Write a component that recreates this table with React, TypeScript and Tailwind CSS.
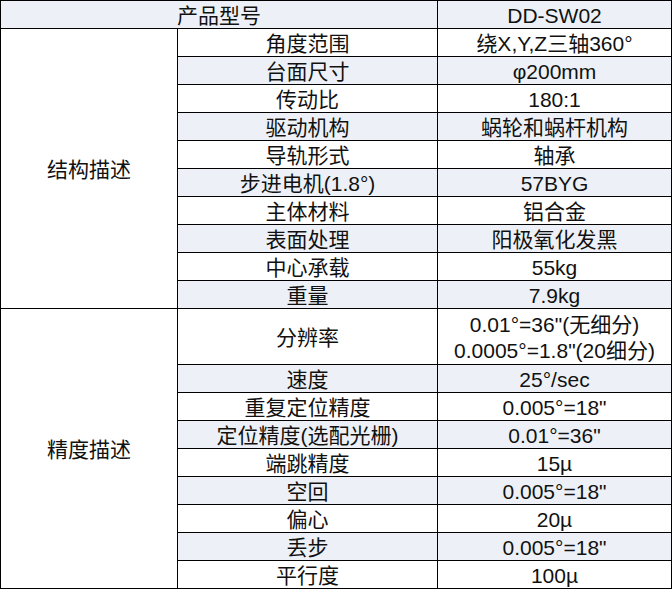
const fill = "bg-[#edf1f7]"

type Row = { name: string; value: string[]; tall?: boolean }

const structure: Row[] = [
  { name: "角度范围", value: ["绕X,Y,Z三轴360°"] },
  { name: "台面尺寸", value: ["φ200mm"] },
  { name: "传动比", value: ["180:1"] },
  { name: "驱动机构", value: ["蜗轮和蜗杆机构"] },
  { name: "导轨形式", value: ["轴承"] },
  { name: "步进电机(1.8°)", value: ["57BYG"] },
  { name: "主体材料", value: ["铝合金"] },
  { name: "表面处理", value: ["阳极氧化发黑"] },
  { name: "中心承载", value: ["55kg"] },
  { name: "重量", value: ["7.9kg"] },
]

const precision: Row[] = [
  { name: "分辨率", value: ['0.01°=36"(无细分)', '0.0005°=1.8"(20细分)'], tall: true },
  { name: "速度", value: ["25°/sec"] },
  { name: "重复定位精度", value: ['0.005°=18"'] },
  { name: "定位精度(选配光栅)", value: ['0.01°=36"'] },
  { name: "端跳精度", value: ["15µ"] },
  { name: "空回", value: ['0.005°=18"'] },
  { name: "偏心", value: ["20µ"] },
  { name: "丢步", value: ['0.005°=18"'] },
  { name: "平行度", value: ["100µ"] },
]

function Cell({ children, shaded, tall }: { children: React.ReactNode; shaded: boolean; tall?: boolean }) {
  return (
    <div
      className={`flex flex-col items-center justify-center whitespace-nowrap pt-[2px] leading-[26px] ${
        tall ? "row-span-2" : ""
      } ${shaded ? fill : "bg-white"}`}
    >
      {children}
    </div>
  )
}

function Section({ title, rows }: { title: string; rows: Row[] }) {
  return (
    <>
      <div className="row-span-10 flex items-center justify-center bg-white pt-[3px]">{title}</div>
      {rows.map((row, i) => {
        const shaded = i % 2 === 1
        return [
          <Cell key={row.name} shaded={shaded} tall={row.tall}>
            {row.name}
          </Cell>,
          <Cell key={row.name + "-v"} shaded={shaded} tall={row.tall}>
            {row.value.map((v) => (
              <span key={v}>{v}</span>
            ))}
          </Cell>,
        ]
      })}
    </>
  )
}

export default function App() {
  return (
    <div
      className="grid w-[672px] grid-cols-[176px_259px_233px] auto-rows-[27px] gap-px bg-black p-px text-[21px] text-[#111]"
      style={{ fontFamily: '"Liberation Sans", "Noto Sans CJK SC", sans-serif' }}
    >
      <div className={`col-span-2 flex items-center justify-center pt-[2px] ${fill}`}>产品型号</div>
      <div className={`flex items-center justify-center pt-[2px] ${fill}`}>DD-SW02</div>
      <Section title="结构描述" rows={structure} />
      <Section title="精度描述" rows={precision} />
    </div>
  )
}
